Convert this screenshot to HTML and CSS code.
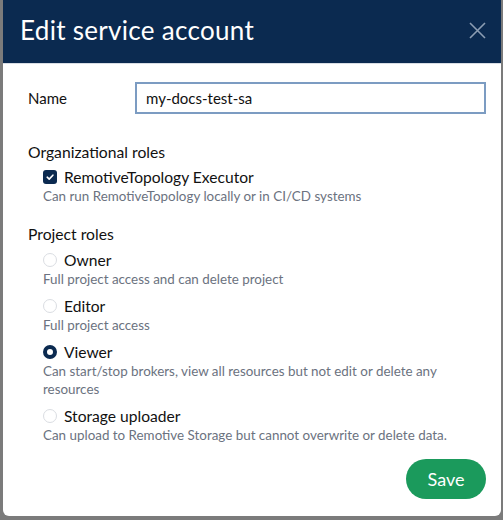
FILE: index.html
```html
<!DOCTYPE html>
<html lang="en">
<head>
  <meta charset="UTF-8">
  <title>Edit service account</title>
  <link rel="stylesheet" href="styles.css">
</head>
<body>

<div class="modal">
  <div class="modal-header">
    <h2>Edit service account</h2>
    <button class="close-btn" aria-label="Close">
      <svg width="17" height="17" viewBox="0 0 17 17"><path d="M1 1L16 16M16 1L1 16" stroke="#8c9db3" stroke-width="1.6" fill="none"/></svg>
    </button>
  </div>

  <div class="modal-body">
    <div class="name-row">
      <label for="name">Name</label>
      <input type="text" id="name" value="my-docs-test-sa">
    </div>

    <div class="section">
      <div class="section-title">Organizational roles</div>
      <div class="option">
        <div class="option-head">
          <span class="checkbox checked">
            <svg width="10" height="10" viewBox="0 0 10 10"><path d="M2.2 5.2L4.2 7.1L7.9 3.2" stroke="#fff" stroke-width="1.6" fill="none" stroke-linecap="round" stroke-linejoin="round"/></svg>
          </span>
          RemotiveTopology Executor
        </div>
        <div class="option-desc">Can run RemotiveTopology locally or in CI/CD systems</div>
      </div>
    </div>

    <div class="section project-roles">
      <div class="section-title">Project roles</div>
      <div class="option">
        <div class="option-head"><span class="radio"></span>Owner</div>
        <div class="option-desc">Full project access and can delete project</div>
      </div>
      <div class="option">
        <div class="option-head"><span class="radio"></span>Editor</div>
        <div class="option-desc">Full project access</div>
      </div>
      <div class="option">
        <div class="option-head"><span class="radio selected"></span>Viewer</div>
        <div class="option-desc">Can start/stop brokers, view all resources but not edit or delete any resources</div>
      </div>
      <div class="option">
        <div class="option-head"><span class="radio"></span>Storage uploader</div>
        <div class="option-desc">Can upload to Remotive Storage but cannot overwrite or delete data.</div>
      </div>
    </div>

    <div class="actions">
      <button class="save-btn">Save</button>
    </div>
  </div>
</div>

</body>
</html>
```

FILE: styles.css
```css
body {
  margin: 0;
  background: #7b7b7b;
  font-family: Lato, "Liberation Sans", sans-serif;
  padding: 0 2px 4px 3px;
}
.modal {
  background: #fff;
  width: 498px;
  height: 516px;
  border-radius: 0 0 6px 6px;
  overflow: hidden;
  box-sizing: border-box;
}
.modal-header {
  background: #0b2a50;
  height: 64px;
  box-sizing: border-box;
  display: flex;
  align-items: center;
  justify-content: space-between;
  padding: 0 15px 3px 17px;
  border-bottom: 1px solid #d8dde4;
}
.modal-header h2 {
  margin: 0;
  color: #fff;
  font-weight: 400;
  font-size: 26px;
  letter-spacing: 0.3px;
}
.close-btn {
  background: none;
  border: none;
  padding: 0;
  width: 17px;
  height: 17px;
  cursor: pointer;
}
.close-btn svg {
  display: block;
}
.modal-body {
  padding: 18px 15px 0 25px;
}
.name-row {
  display: flex;
  align-items: center;
}
.name-row label {
  width: 107px;
  font-size: 15px;
  color: #111;
}
.name-row input {
  flex: 1;
  height: 32px;
  box-sizing: border-box;
  border: 2px solid #7c9cc2;
  padding: 0 9px;
  font-family: inherit;
  font-size: 15px;
  color: #111;
  outline: none;
}
.section {
  margin-top: 28px;
}
.section.project-roles {
  margin-top: 19px;
}
.section-title {
  font-size: 15.7px;
  color: #111;
  line-height: 20px;
}
.option {
  padding-left: 15px;
  margin-top: 5px;
}
.project-roles .option {
  margin-top: 6px;
}
.project-roles .option + .option {
  margin-top: 8px;
}
.option-head {
  display: flex;
  align-items: center;
  gap: 7px;
  font-size: 15.6px;
  line-height: 20px;
  color: #111;
}
.option-desc {
  font-size: 13.4px;
  line-height: 18px;
  color: #6b7280;
}
.checkbox {
  width: 14px;
  height: 14px;
  border-radius: 3px;
  background: #0b2a50;
  display: flex;
  align-items: center;
  justify-content: center;
}
.radio {
  width: 14px;
  height: 14px;
  box-sizing: border-box;
  border-radius: 50%;
  border: 1px solid #dadde2;
  background: #fff;
}
.radio.selected {
  border: 4px solid #0b2a50;
}
.actions {
  display: flex;
  justify-content: flex-end;
  margin-top: 15px;
}
.save-btn {
  background: #1b9a5c;
  color: #fff;
  border: none;
  border-radius: 20px;
  width: 80px;
  height: 40px;
  font-family: inherit;
  font-size: 18px;
  cursor: pointer;
}
```
